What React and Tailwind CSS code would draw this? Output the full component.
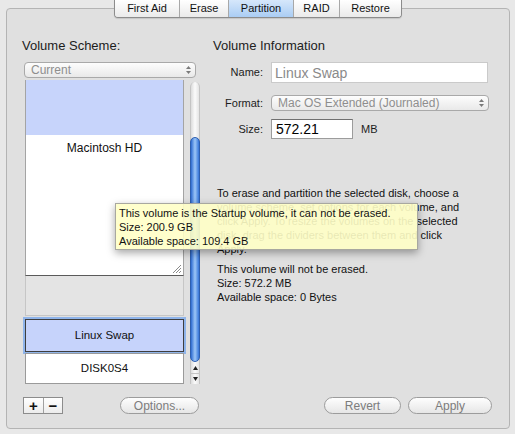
const TABS = [
  { label: 'First Aid', w: 'w-[64px]' },
  { label: 'Erase', w: 'w-[49px]' },
  { label: 'Partition', w: 'w-[65px]', active: true },
  { label: 'RAID', w: 'w-[46px]' },
  { label: 'Restore', w: 'w-[62px]' },
];

function Popup({ label, className = '' }) {
  return (
    <div className={`flex items-center h-[16px] rounded-[4px] border border-[#a9a9a9] bg-linear-to-b from-[#fdfdfd] to-[#e9e9e9] ${className}`}>
      <span className="flex-1 pl-[6px] text-[12px] leading-none text-[#8e8e8e] whitespace-nowrap">{label}</span>
      <span className="w-[14px] h-full flex flex-col items-center justify-center gap-[2px]">
        <svg width="5" height="3" viewBox="0 0 5 3"><path d="M0 3L2.5 0L5 3Z" fill="#7a7a7a" /></svg>
        <svg width="5" height="3" viewBox="0 0 5 3"><path d="M0 0L2.5 3L5 0Z" fill="#7a7a7a" /></svg>
      </span>
    </div>
  );
}

function PillButton({ children, className = '' }) {
  return (
    <div className={`h-[17px] rounded-full border border-[#9c9c9c] bg-linear-to-b from-[#fefefe] to-[#e6e6e6] flex items-center justify-center text-[12px] leading-none text-[#7c7c7c] ${className}`}>
      {children}
    </div>
  );
}

function Row({ label, children, className = '' }) {
  return (
    <div className={`flex items-center ${className}`}>
      <span className="w-[50px] text-right text-[11px] leading-none text-[#1c1c1c]">{label}</span>
      <div className="ml-[8px] flex items-center">{children}</div>
    </div>
  );
}

export default function App() {
  return (
    <div className="relative w-[515px] h-[434px] overflow-hidden bg-[#e8e8e8] pt-[8px] pl-[6px] font-['Liberation_Sans',Arial,sans-serif] text-[#1c1c1c]">
      <div className="w-[504px] h-[421px] rounded-[4px] border border-[#b4b4b4] bg-[#e0e0e0] flex flex-col">
        {/* tabs */}
        <div className="flex justify-center -mt-[9px]">
          <div className="flex h-[18px] border border-[#8c8c8c] border-t-0 rounded-b-[4px] overflow-hidden shadow-[0_1px_1px_rgba(0,0,0,0.12)]">
            {TABS.map((t, i) => (
              <div
                key={t.label}
                className={`${t.w} ${i > 0 ? 'border-l border-[#a8a8a8]' : ''} ${t.active ? 'bg-linear-to-b from-[#d6e7fb] to-[#aacdf3]' : 'bg-linear-to-b from-[#ffffff] to-[#eaeaea]'} flex items-center justify-center text-[11px] leading-none text-[#111]`}
              >
                {t.label}
              </div>
            ))}
          </div>
        </div>

        <div className="flex">
          {/* left column */}
          <div className="w-[193px] pl-[15px]">
            <div className="mt-[20px] h-[16px] text-[13px] leading-[16px]">Volume Scheme:</div>
            <Popup label="Current" className="ml-[2px] mt-[8px] w-[172px]" />
            <div className="ml-[2px] mt-[2px] flex">
              <div className="w-[160px]">
                <div className="relative ml-[1px] w-[159px] border-x border-[#a4a4a4] border-b border-b-[#5a5a5a]">
                  <div className="h-[55px] bg-[#c7d4fb]" />
                  <div className="h-[140px] bg-white pt-[6px] text-center text-[12px] leading-[14px] text-[#111]">Macintosh HD</div>
                  <svg className="absolute right-[1px] bottom-[1px]" width="11" height="11" viewBox="0 0 11 11">
                    <path d="M10 2L2 10M10 5L5 10M10 8L8 10" stroke="#8a8a8a" strokeWidth="1" />
                    <path d="M10.5 3L3 10.5M10.5 6L6 10.5" stroke="#ffffff" strokeWidth="0.6" />
                  </svg>
                </div>
                <div className="ml-[1px] w-[159px] h-[40px] border border-t-0 border-[#c6c6c6] bg-[#e4e4e4]" />
                <div className="ml-[1px] mt-[3px] w-[159px] h-[33px] border border-[#3e3e3e] bg-[#c6d3fb] shadow-[0_0_0_2px_#8fb4ea] flex items-center justify-center text-[11.5px] leading-none text-[#111]">
                  Linux Swap
                </div>
                <div className="ml-[1px] mt-[1px] w-[159px] h-[31px] border border-[#9a9a9a] bg-white flex items-center justify-center text-[11.5px] leading-none text-[#111]">
                  DISK0S4
                </div>
              </div>
              {/* scrollbar */}
              <div className="ml-[6px] mt-[2px] w-[10px] h-[302px] flex flex-col border-x border-[#c4c4c4] bg-linear-to-r from-[#dcdcdc] via-[#fbfbfb] to-[#e4e4e4] rounded-t-full">
                <div className="h-[55px]" />
                <div className="h-[225px] -mx-[1px] rounded-full border border-[#2d5fb0] bg-linear-to-r from-[#2e6bd0] via-[#9cc6f7] to-[#3574d8]" />
                <div className="flex-1 flex flex-col items-center justify-center gap-[3px]">
                  <svg width="5" height="4" viewBox="0 0 5 4"><path d="M0 4L2.5 0L5 4Z" fill="#222" /></svg>
                  <div className="w-full h-px bg-[#c4c4c4]" />
                  <svg width="5" height="4" viewBox="0 0 5 4"><path d="M0 0L2.5 4L5 0Z" fill="#222" /></svg>
                </div>
              </div>
            </div>
          </div>

          {/* right column */}
          <div className="flex-1 pl-[13px]">
            <div className="mt-[20px] h-[16px] text-[13px] leading-[16px] text-[#222]">Volume Information</div>
            <Row label="Name:" className="mt-[8px] h-[21px]">
              <div className="w-[217px] h-[21px] border border-[#cacaca] bg-white pl-[3px] flex items-center text-[14px] leading-none text-[#8a8a8a]">Linux Swap</div>
            </Row>
            <Row label="Format:" className="mt-[12px] h-[16px]">
              <Popup label="Mac OS Extended (Journaled)" className="w-[218px]" />
            </Row>
            <Row label="Size:" className="mt-[8px] h-[20px]">
              <div className="w-[82px] h-[20px] border border-[#9c9c9c] border-t-[#707070] bg-white pl-[4px] flex items-center text-[14px] leading-none text-black">572.21</div>
              <span className="ml-[8px] text-[11px] leading-none">MB</span>
            </Row>
            <div className="mt-[47px] ml-[4px] text-[11px] leading-[14px] text-[#111]">
              <div>To erase and partition the selected disk, choose a</div>
              <div>volume scheme, set options for each volume, and</div>
              <div>click Apply. To resize the volumes on the selected</div>
              <div>disk, drag the dividers between them and click</div>
              <div>Apply.</div>
            </div>
            <div className="mt-[6px] ml-[4px] text-[11px] leading-[14px] text-[#111]">
              <div>This volume will not be erased.</div>
              <div>Size: 572.2 MB</div>
              <div>Available space: 0 Bytes</div>
            </div>
          </div>
        </div>

        {/* bottom buttons */}
        <div className="mt-[13px] flex items-center h-[17px] pl-[16px] pr-[17px]">
          <div className="flex h-[17px] border border-[#8c8c8c] bg-linear-to-b from-[#ffffff] to-[#ececec]">
            <div className="w-[19px] flex items-center justify-center text-[15px] font-bold leading-none text-[#111]">+</div>
            <div className="w-[19px] border-l border-[#a0a0a0] flex items-center justify-center text-[15px] font-bold leading-none text-[#111]">−</div>
          </div>
          <PillButton className="ml-[57px] w-[79px]">Options...</PillButton>
          <div className="flex-1" />
          <PillButton className="w-[77px]">Revert</PillButton>
          <PillButton className="ml-[7px] w-[84px]">Apply</PillButton>
        </div>
      </div>

      {/* tooltip */}
      <div className="absolute left-[115px] top-[203px] w-[303px] h-[47px] border border-[#a8a8a0] bg-[#ffffc6]/90 shadow-[0_3px_8px_rgba(0,0,0,0.35)] pl-[3px] pt-[2px] text-[11px] leading-[14px] text-[#111]">
        <div>This volume is the Startup volume, it can not be erased.</div>
        <div>Size: 200.9 GB</div>
        <div>Available space: 109.4 GB</div>
      </div>
    </div>
  );
}
